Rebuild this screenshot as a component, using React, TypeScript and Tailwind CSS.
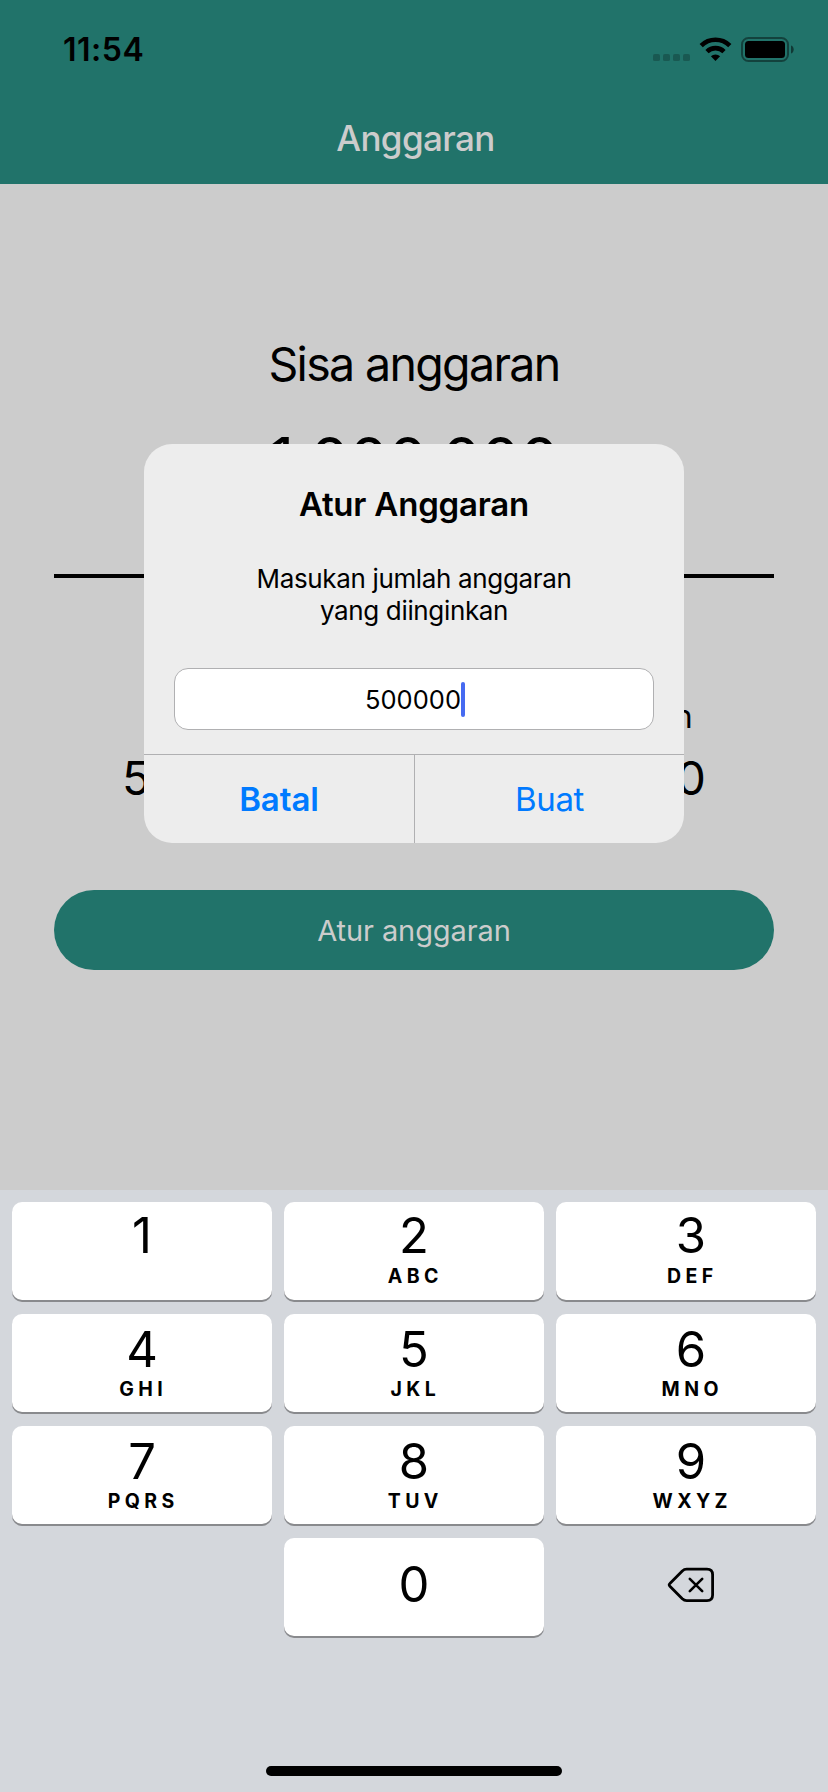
import React from "react";

const keys = [
  { n: "1", s: "" },
  { n: "2", s: "ABC" },
  { n: "3", s: "DEF" },
  { n: "4", s: "GHI" },
  { n: "5", s: "JKL" },
  { n: "6", s: "MNO" },
  { n: "7", s: "PQRS" },
  { n: "8", s: "TUV" },
  { n: "9", s: "WXYZ" },
];

function StatusIcons() {
  return (
    <svg width="144" height="30" viewBox="650 34 144 30" className="block">
      <g fill="#000" fillOpacity="0.22">
        <rect x="653" y="54" width="7" height="7" rx="1.6" />
        <rect x="663" y="54" width="7" height="7" rx="1.6" />
        <rect x="673" y="54" width="7" height="7" rx="1.6" />
        <rect x="683" y="54" width="7" height="7" rx="1.6" />
      </g>
      <g fill="none" stroke="#000" strokeWidth="4.6">
        <path d="M701.2 45.6a20.5 20.5 0 0 1 28.6 0" />
        <path d="M707 51.6a12.2 12.2 0 0 1 17 0" />
      </g>
      <path d="M715.5 61l-4.6-4.7a6.6 6.6 0 0 1 9.2 0z" />
      <rect x="742" y="38" width="46" height="23" rx="6.5" fill="none" stroke="#000" strokeOpacity="0.42" strokeWidth="2" />
      <rect x="745" y="41" width="40" height="17" rx="3.5" />
      <path d="M791 45.5c3.6 1 3.6 7 0 8z" fillOpacity="0.5" />
    </svg>
  );
}

function DeleteIcon() {
  return (
    <svg width="48" height="36" viewBox="667 1567 48 36" fill="none" stroke="#000" strokeWidth="2.8" strokeLinecap="round" strokeLinejoin="round">
      <path d="M669.9 1583.4l12.4-12.5q1.9-1.8 4.4-1.8h20.3q5.6 0 5.6 5.6v20.3q0 5.6-5.6 5.6h-20.3q-2.5 0-4.4-1.8l-12.4-12.6q-1.5-1.4 0-2.8z" />
      <path d="M689.8 1578.8l12.4 12.4M702.2 1578.8l-12.4 12.4" strokeWidth="2.6" />
    </svg>
  );
}

export default function App() {
  return (
    <div className="relative flex h-[1792px] w-[828px] flex-col overflow-hidden bg-[#cccccc] font-['Inter',sans-serif] text-black">
      <header className="flex h-[184px] flex-col bg-[#21736a]">
        <div className="flex h-[98px] items-start justify-between pr-[34px] pl-[63px] pt-[34px]">
          <span className="text-[32px] leading-[32px] font-semibold tracking-[0.5px]">11:54</span>
          <StatusIcons />
        </div>
        <h1 className="mt-[22px] pl-[3px] text-center text-[35px] leading-[36px] font-medium tracking-[-0.6px] text-[#cccccc]">Anggaran</h1>
      </header>

      <main className="flex h-[1006px] flex-col px-[54px]">
        <p className="mt-[152px] text-center text-[46.5px] leading-[56px] tracking-[-1.65px]">Sisa anggaran</p>
        <p className="mt-[32px] text-center text-[62px] leading-[72px] tracking-[-0.1px]">1.000.000</p>
        <div className="mt-[78px] h-1 bg-black" />
        <div className="mt-[119px] grid grid-cols-2">
          <div className="flex flex-col items-center pr-[36px] pt-[40px]">
            <span className="mt-[13px] text-[47px] leading-[56px]">500.000</span>
          </div>
          <div className="flex flex-col items-center pl-[36px]">
            <span className="pr-[7px] text-[32px] leading-[40px] tracking-[-1px]">Pemasukan</span>
            <span className="mt-[13px] text-[47px] leading-[56px]">500.000</span>
          </div>
        </div>
        <button className="mt-[84px] h-20 shrink-0 rounded-full bg-[#21736a] pt-[2px] text-[29px] leading-[36px] tracking-[-0.1px] text-[#cccccc]">Atur anggaran</button>
      </main>

      <section className="flex flex-1 flex-col items-center bg-[#d4d7dc]">
        <div className="mt-3 grid w-full grid-cols-3 gap-x-3 gap-y-[14px] px-3">
          {keys.map((k, i) => (
            <button
              key={k.n}
              className={`flex h-[98px] flex-col items-center rounded-[10px] bg-white shadow-[0_2px_0_#898a8d] ${i < 3 ? "pt-[9px]" : "pt-[11px]"} ${i % 3 === 2 ? "pl-[10px]" : "pl-0"}`}
            >
              <span className="text-[49px] leading-[49px]">{k.n}</span>
              <span className={`pl-[2.5px] text-[19.5px] leading-[20px] font-bold tracking-[4.4px] ${i < 3 ? "mt-[6px]" : "mt-[5px]"}`}>{k.s}</span>
            </button>
          ))}
          <span />
          <button className="flex h-[98px] flex-col items-center rounded-[10px] bg-white pt-[22px] shadow-[0_2px_0_#898a8d]">
            <span className="text-[49px] leading-[49px]">0</span>
          </button>
          <button className="flex h-[98px] items-start justify-center pt-[29px] pl-[10px]">
            <DeleteIcon />
          </button>
        </div>
        <div className="mt-[130px] h-[10px] w-[296px] rounded-full bg-black" />
      </section>

      <div className="absolute top-[444px] left-[144px] flex h-[399px] w-[540px] flex-col overflow-hidden rounded-[28px] bg-[#ededed]">
        <h2 className="mt-[40px] text-center text-[33px] leading-[40px] font-semibold tracking-[-0.2px]">Atur Anggaran</h2>
        <p className="mt-[39px] text-center text-[26px] leading-[32px] tracking-[-0.35px]">
          Masukan jumlah anggaran
          <br />
          yang diinginkan
        </p>
        <div className="mx-[30px] mt-[41px] flex h-[62px] items-center justify-center rounded-[14px] border border-[#b0b0b2] bg-white pl-[2px]">
          <span className="pt-[2px] text-[25.5px] leading-[32px]">500000</span>
          <span className="h-[35px] w-1 rounded-full bg-[#466af1]" />
        </div>
        <div className="mt-6 grid flex-1 grid-cols-2 border-t border-[#b0b0b2] text-[#007aff]">
          <button className="text-[33px] leading-[40px] font-semibold tracking-[-0.1px]">Batal</button>
          <button className="border-l border-[#b0b0b2] text-[33px] leading-[40px] tracking-[-0.4px]">Buat</button>
        </div>
      </div>
    </div>
  );
}
